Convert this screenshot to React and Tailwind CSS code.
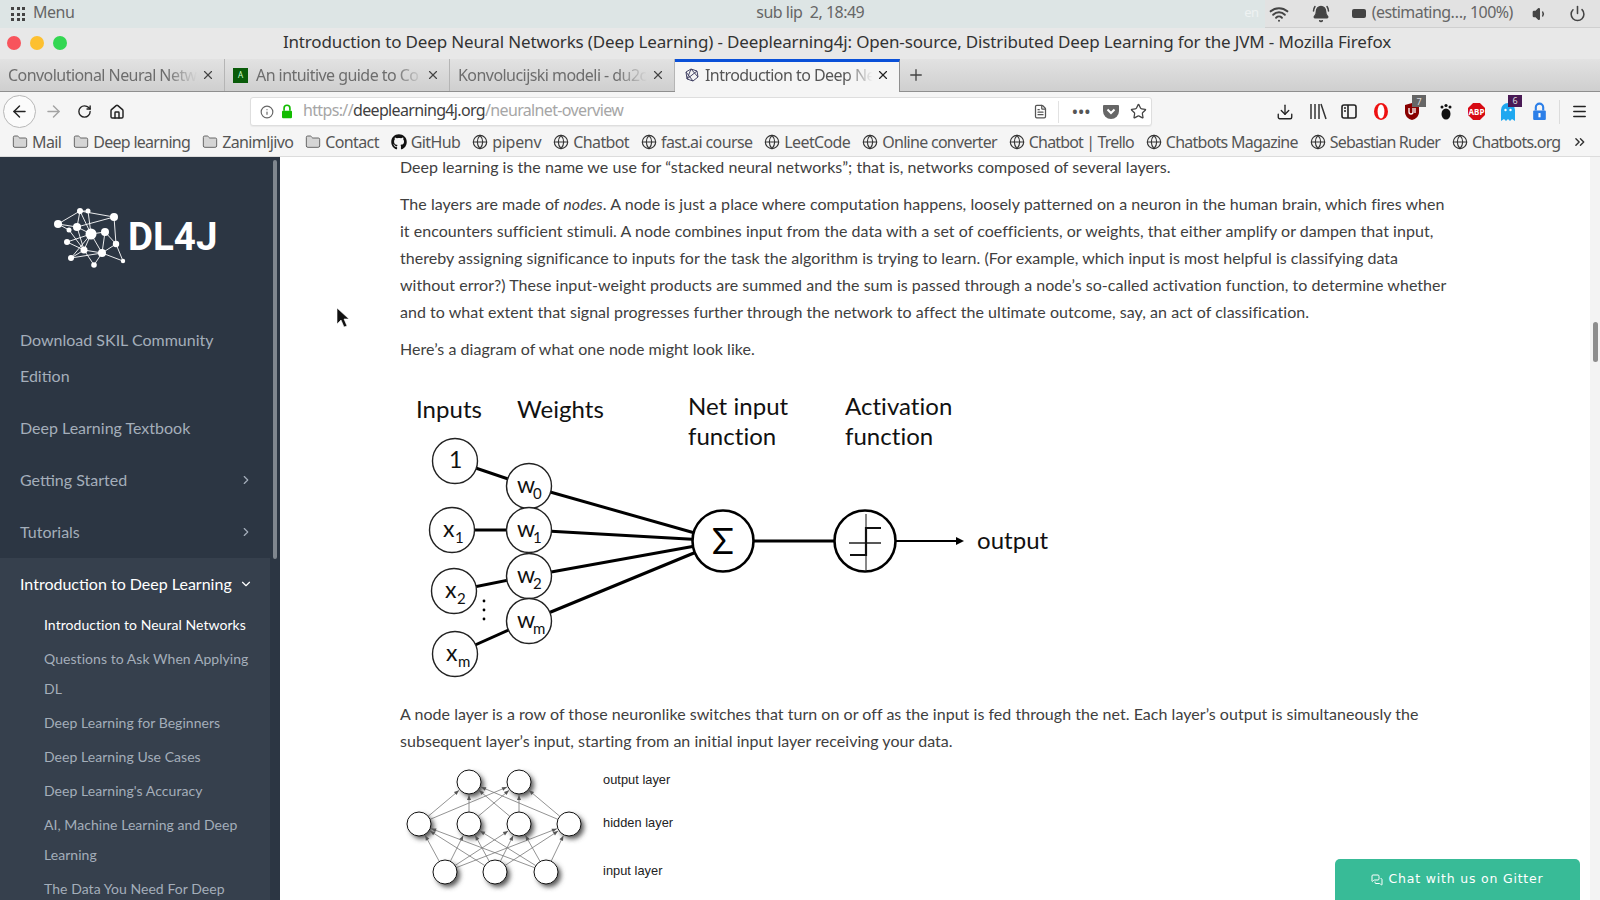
import { ArrowLeft, ArrowRight, RotateCw, Home, Info, Download, Star, Menu as MenuIcon, X, Plus, ChevronRight, ChevronDown, ChevronsRight, Volume1, Power, BellRing, Wifi, Folder, Globe, MessagesSquare, FileText } from "lucide-react";
import { FaGithub } from "react-icons/fa";

const chrome = "font-['Noto_Sans','Open_Sans',sans-serif]";

function PadLock({ color, width, height, className, keyhole }) {
  return (
    <svg width={width} height={height} viewBox="0 0 14 18" className={className}>
      <path d="M3.5 8V5a3.5 3.5 0 0 1 7 0v3" fill="none" stroke={color} strokeWidth="2" />
      <rect x="1" y="8" width="12" height="9" rx="1" fill={color} />
      {keyhole && <rect x="6" y="10.5" width="2" height="4" fill="#fff" />}
    </svg>
  );
}

function Tab({ title, width, icon }) {
  return (
    <div className="flex h-full items-center border-r border-[#b5b5b5] pl-[8px] pr-[9px]" style={{ width }}>
      {icon}
      <span className="min-w-0 flex-1 overflow-hidden whitespace-nowrap text-[#6d6d6d] text-[16px] tracking-[-0.55px] [mask-image:linear-gradient(to_right,black_82%,transparent_98%)]">{title}</span>
      <X size={14} strokeWidth={2} className="shrink-0 text-[#444]" />
    </div>
  );
}

function Bookmark({ label, type, track = "tracking-[-0.62px]" }) {
  return (
    <div className="flex items-center gap-[4px] whitespace-nowrap">
      {type === "folder" && <Folder size={16} strokeWidth={1.3} fill="#d5d5d5" className="text-[#555]" />}
      {type === "globe" && <Globe size={16} strokeWidth={1.7} className="text-[#333]" />}
      {type === "github" && <FaGithub size={16} className="text-[#111]" />}
      <span className={`text-[16px] text-[#555] ${track}`}>{label}</span>
    </div>
  );
}

function Logo() {
  const pts = [[58, 68], [80, 55], [88, 55], [114, 61], [77, 71], [91, 78], [105, 76], [67, 86], [116, 88], [84, 94], [102, 97], [71, 102], [94, 109], [123, 105], [69, 74]];
  const edges = [[0, 1], [0, 4], [0, 14], [1, 2], [1, 4], [1, 5], [2, 5], [3, 4], [3, 8], [3, 1], [4, 5], [4, 9], [5, 6], [5, 10], [5, 9], [6, 8], [6, 10], [7, 5], [7, 9], [8, 10], [8, 13], [9, 10], [9, 11], [9, 12], [10, 12], [10, 13], [11, 10], [14, 9], [5, 11]];
  const sizes = [4, 3, 2.5, 4, 4, 5.5, 4, 3, 3.2, 3.5, 4, 3, 2.8, 2.2, 2.5];
  return (
    <div className="flex h-[108px] items-center pl-[52px]">
      <svg width="76" height="66" viewBox="52 48 76 66" className="shrink-0">
        {edges.map(([a, b], i) => (
          <line key={i} x1={pts[a][0]} y1={pts[a][1]} x2={pts[b][0]} y2={pts[b][1]} stroke="#fff" strokeWidth="0.9" />
        ))}
        {pts.map(([x, y], i) => (
          <circle key={i} cx={x} cy={y} r={sizes[i]} fill="#fff" />
        ))}
      </svg>
      <span className="font-['Roboto',sans-serif] text-[38.5px] font-bold leading-none text-white">DL4J</span>
    </div>
  );
}

function TopItem({ label, arrow, active, className }) {
  return (
    <div className={`flex items-center justify-between pl-[20px] pr-[17px] py-[8px] text-[16px] leading-[36px] ${active ? "text-white" : "text-[#a4aeba]"} ${className || ""}`}>
      <span>{label}</span>
      {arrow === "right" && <ChevronRight size={14} className="text-[#a4aeba]" />}
      {arrow === "down" && <ChevronDown size={14} className="text-white" />}
    </div>
  );
}

function SubItem({ label, active }) {
  return (
    <div className={`py-[2px] pl-[44px] pr-[18px] text-[14px] leading-[30px] tracking-[0.05px] ${active ? "text-white" : "text-[#a4aeba]"}`}>{label}</div>
  );
}

function Sidebar() {
  return (
    <div className="flex w-[280px] shrink-0 overflow-hidden bg-[#2c3643] font-['Lato',sans-serif]">
      <div className="w-[270px] shrink-0">
        <div className="h-[26px]" />
        <Logo />
        <div className="h-[23px]" />
        <TopItem label="Download SKIL Community Edition" />
        <TopItem label="Deep Learning Textbook" />
        <TopItem label="Getting Started" arrow="right" />
        <TopItem label="Tutorials" arrow="right" />
        <div className="bg-[#36404d] pb-[20px]">
          <TopItem label="Introduction to Deep Learning" arrow="down" active className="mb-[-2px]" />
          <SubItem label="Introduction to Neural Networks" active />
          <SubItem label="Questions to Ask When Applying DL" />
          <SubItem label="Deep Learning for Beginners" />
          <SubItem label="Deep Learning Use Cases" />
          <SubItem label="Deep Learning's Accuracy" />
          <SubItem label="AI, Machine Learning and Deep Learning" />
          <SubItem label="The Data You Need For Deep Learning" />
        </div>
      </div>
      <div className="ml-[3px] mt-[3px] h-[399px] w-[4px] rounded-full bg-[#7f868e]" />
    </div>
  );
}

function NodeDiagram() {
  const nodes = [
    [55, 81, "1", ""],
    [129, 106, "w", "0"],
    [52, 150, "x", "1"],
    [129, 150, "w", "1"],
    [54, 211, "x", "2"],
    [129, 196, "w", "2"],
    [129, 241, "w", "m"],
    [55, 274, "x", "m"],
  ];
  const cx = 323;
  const cy = 161;
  return (
    <svg width="660" height="310" viewBox="0 0 660 310" className="block font-['Lato','Open_Sans',sans-serif]">
      <g stroke="#000" fill="none">
        <line x1="55" y1="81" x2="129" y2="106" strokeWidth="3" />
        <line x1="52" y1="150" x2="129" y2="150" strokeWidth="3" />
        <line x1="54" y1="211" x2="129" y2="196" strokeWidth="3" />
        <line x1="55" y1="274" x2="129" y2="241" strokeWidth="3" />
        <line x1="129" y1="106" x2={cx} y2={cy} strokeWidth="3" />
        <line x1="129" y1="150" x2={cx} y2={cy} strokeWidth="3" />
        <line x1="129" y1="196" x2={cx} y2={cy} strokeWidth="3" />
        <line x1="129" y1="241" x2={cx} y2={cy} strokeWidth="3" />
        <line x1="323" y1="161" x2="466" y2="161" strokeWidth="3" />
        <line x1="466" y1="161" x2="558" y2="161" strokeWidth="2" />
      </g>
      <polygon points="564,161 556,157 556,165" fill="#000" />
      {nodes.map(([x, y, l, sub]) => (
        <g key={`${l}${sub}`}>
          <circle cx={x} cy={y} r="22.5" fill="#fff" stroke="#222" strokeWidth="1.4" />
          <text x={x - (sub ? (l === "x" ? 9 : 12) : 6)} y={y + 7} fontSize="23" fill="#111">{l}</text>
          {sub && <text x={x + (l === "x" ? 3 : 4)} y={y + 13} fontSize="15" fill="#111">{sub}</text>}
        </g>
      ))}
      <circle cx="323" cy="161" r="30.5" fill="#fff" stroke="#000" strokeWidth="2.6" />
      <circle cx="465" cy="161" r="30.5" fill="#fff" stroke="#000" strokeWidth="2.6" />
      <text x="323" y="174" fontSize="36" textAnchor="middle" fill="#000">Σ</text>
      <g stroke="#111" fill="none">
        <path d="M466 134V190" strokeWidth="1" />
        <path d="M481 148H466V175H450" strokeWidth="2.2" />
        <path d="M449 163H481" strokeWidth="1.4" />
      </g>
      <g fontSize="24" fill="#111">
        <text x="16" y="38">Inputs</text>
        <text x="117" y="38">Weights</text>
        <text x="288" y="35">Net input</text>
        <text x="288" y="65">function</text>
        <text x="445" y="35">Activation</text>
        <text x="445" y="65">function</text>
        <text x="577" y="169">output</text>
      </g>
      <g fill="#000">
        <circle cx="84" cy="221" r="1.4" />
        <circle cx="84" cy="230" r="1.4" />
        <circle cx="84" cy="239" r="1.4" />
      </g>
    </svg>
  );
}

function LayerDiagram() {
  const out = [[79, 32], [129, 32]];
  const hid = [[29, 74], [79, 74], [129, 74], [179, 74]];
  const inp = [[55, 122], [105, 122], [156, 122]];
  const lines = [];
  hid.forEach((h) => out.forEach((o) => lines.push([h, o])));
  inp.forEach((i) => hid.forEach((h) => lines.push([i, h])));
  const arrow = ([x1, y1], [x2, y2]) => {
    const d = Math.hypot(x2 - x1, y2 - y1);
    const ux = (x2 - x1) / d;
    const uy = (y2 - y1) / d;
    const tx = x2 - ux * 13;
    const ty = y2 - uy * 13;
    return { x1: x1 + ux * 12, y1: y1 + uy * 12, tx, ty, ux, uy };
  };
  return (
    <svg width="320" height="150" viewBox="0 0 320 150" className="block">
      <defs>
        <filter id="soft" x="-50%" y="-50%" width="200%" height="200%">
          <feGaussianBlur stdDeviation="2.5" />
        </filter>
      </defs>
      {lines.map(([a, b], i) => {
        const p = arrow(a, b);
        return (
          <g key={i}>
            <line x1={p.x1} y1={p.y1} x2={p.tx} y2={p.ty} stroke="#777" strokeWidth="0.8" />
            <polygon
              points={`${p.tx},${p.ty} ${p.tx - p.ux * 5 - p.uy * 2},${p.ty - p.uy * 5 + p.ux * 2} ${p.tx - p.ux * 5 + p.uy * 2},${p.ty - p.uy * 5 - p.ux * 2}`}
              fill="#555"
            />
          </g>
        );
      })}
      {[...out, ...hid, ...inp].map(([x, y], i) => (
        <g key={i}>
          <circle cx={x + 3} cy={y + 3} r="12" fill="#555" filter="url(#soft)" />
          <circle cx={x} cy={y} r="12" fill="#fff" stroke="#111" strokeWidth="1" />
        </g>
      ))}
      <g fontSize="12.8" fill="#222" className="font-['Liberation_Sans',sans-serif]">
        <text x="213" y="34">output layer</text>
        <text x="213" y="77">hidden layer</text>
        <text x="213" y="125">input layer</text>
      </g>
    </svg>
  );
}

function Badge({ text, bg }) {
  return (
    <span className="absolute -right-[6px] -top-[7px] flex h-[12px] w-[14px] items-center justify-center text-[9px] leading-none text-[#ddd]" style={{ background: bg }}>{text}</span>
  );
}

function Toolbar() {
  return (
    <div className="flex h-[36px] items-center bg-[#f5f5f5] pl-[3px] pt-[3px]">
      <div className="flex h-[33px] w-[33px] items-center justify-center rounded-full border border-[#b8b8b8] bg-[#fbfbfb]">
        <ArrowLeft size={19} strokeWidth={1.8} className="text-[#222]" />
      </div>
      <ArrowRight size={19} strokeWidth={1.8} className="ml-[8px] text-[#a3a3a3]" />
      <RotateCw size={15} strokeWidth={2.2} className="ml-[14px] text-[#222]" />
      <Home size={16} strokeWidth={2.2} className="ml-[17px] text-[#222]" />
      <div className="ml-[125px] flex h-[29px] w-[902px] items-center rounded-[3px] border border-[#dedede] bg-white pl-[9px] pr-[4px] shadow-[0_1px_1px_rgba(0,0,0,0.05)]">
        <Info size={14} className="text-[#666]" />
        <PadLock color="#12bc00" width={12} height={15} className="ml-[7px]" />
        <span className="ml-[10px] whitespace-nowrap pb-[3px] text-[16px] tracking-[-0.65px] text-[#a6a6a6]">
          https://<span className="text-[#3f3f3f]">deeplearning4j.org</span>/neuralnet-overview
        </span>
        <FileText size={15} className="ml-auto text-[#555]" />
        <div className="ml-[10px] mr-[13px] h-[22px] w-px bg-[#e2e2e2]" />
        <span className="text-[14px] font-bold leading-none tracking-[1px] text-[#555]">•••</span>
        <svg width="18" height="17" viewBox="0 0 18 17" className="ml-[11px]">
          <path d="M2 2h14a1 1 0 0 1 1 1v5a8 8 0 0 1-16 0V3a1 1 0 0 1 1-1z" fill="#666" />
          <path d="M5.5 6.5L9 10l3.5-3.5" fill="none" stroke="#fff" strokeWidth="2" />
        </svg>
        <Star size={17} strokeWidth={1.8} className="ml-[10px] text-[#444]" />
      </div>
      <div className="ml-[124px] flex items-center">
        <Download size={18} strokeWidth={1.8} className="text-[#222]" />
        <svg width="18" height="17" viewBox="0 0 18 17" className="ml-[15px] text-[#333]" stroke="currentColor" strokeWidth="1.5">
          <path d="M2 1v15M6 1v15M10 1v15M12 1l5 15" fill="none" />
        </svg>
        <svg width="16" height="15" viewBox="0 0 16 15" className="ml-[14px]" fill="none" stroke="#222" strokeWidth="1.6">
          <rect x="1" y="1" width="14" height="13" rx="2" />
          <path d="M7 1v13M3 4h2M3 7h2" />
        </svg>
        <svg width="16" height="19" viewBox="0 0 16 19" className="ml-[16px]">
          <ellipse cx="8" cy="9.5" rx="7" ry="8.5" fill="#e11" />
          <ellipse cx="8" cy="9.5" rx="3.4" ry="7" fill="#fff" />
        </svg>
        <div className="relative ml-[15px]">
          <svg width="16" height="19" viewBox="0 0 16 19" className="block">
            <path d="M8 1l7 2v7c0 4-3 7-7 8-4-1-7-4-7-8V3z" fill="#800" />
            <path d="M5 6v4a2 2 0 0 0 4 0V6M11 6v5" fill="none" stroke="#fff" strokeWidth="1.3" />
          </svg>
          <Badge text="7" bg="#666" />
        </div>
        <svg width="14" height="18" viewBox="0 0 14 18" className="ml-[19px]">
          <ellipse cx="7" cy="11" rx="4.5" ry="5.5" fill="#111" />
          <circle cx="3" cy="4" r="1.5" fill="#111" />
          <circle cx="7" cy="2.5" r="1.6" fill="#111" />
          <circle cx="11" cy="4" r="1.5" fill="#111" />
        </svg>
        <div className="ml-[15px] flex h-[17px] w-[17px] items-center justify-center bg-[#d70b14] text-[8px] font-bold leading-none text-white [clip-path:polygon(30%_0,70%_0,100%_30%,100%_70%,70%_100%,30%_100%,0_70%,0_30%)]">ABP</div>
        <div className="relative ml-[15px]">
          <svg width="16" height="20" viewBox="0 0 16 20" className="block">
            <path d="M1 19V8a7 7 0 0 1 14 0v11l-3-2-2 2-2-2-2 2-2-2z" fill="#1fa8f0" />
            <circle cx="5.5" cy="8" r="1.2" fill="#fff" />
            <circle cx="10.5" cy="8" r="1.2" fill="#fff" />
          </svg>
          <Badge text="6" bg="#4a1a55" />
        </div>
        <PadLock color="#2c7fe8" width={15} height={19} className="ml-[16px]" keyhole />
        <div className="ml-[12px] h-[24px] w-px bg-[#dcdcdc]" />
        <MenuIcon size={17} strokeWidth={2.2} className="ml-[11px] text-[#222]" />
      </div>
    </div>
  );
}

export default function App() {
  return (
    <div className={`flex h-[900px] w-[1600px] flex-col overflow-hidden bg-white ${chrome}`}>
      {/* desktop panel */}
      <div className="flex h-[28px] items-center bg-[#dde5e5] text-[16px] tracking-[-0.5px] text-[#666]">
        <div className="ml-[11px] grid grid-cols-3 gap-[2.5px]">
          {Array.from({ length: 9 }).map((_, i) => (
            <span key={i} className="h-[3px] w-[3px] bg-[#444]" />
          ))}
        </div>
        <span className="ml-[8px] pb-[4px]">Menu</span>
        <span className="ml-[682px] pb-[4px]">sub lip&nbsp; 2, 18:49</span>
        <span className="ml-[380px] pb-[2px] text-[13px] text-[#eef2f2]">en</span>
        <div className="ml-[6px] flex h-[28px] flex-1 items-center border-b border-[#cfcfcf] bg-[#e2e2e2] pl-[4px]">
          <Wifi size={20} strokeWidth={2.4} className="text-[#444]" />
          <BellRing size={18} fill="#444" className="ml-[23px] text-[#444]" />
          <span className="ml-[22px] h-[9px] w-[14px] rounded-[2px] bg-[#444]" />
          <span className="ml-[6px] whitespace-nowrap pb-[4px] tracking-[-0.55px]">(estimating…, 100%)</span>
          <Volume1 size={16} fill="#444" className="ml-[19px] text-[#444]" />
          <Power size={17} strokeWidth={2.2} className="ml-[21px] text-[#444]" />
        </div>
      </div>

      {/* window title */}
      <div className="relative flex h-[31px] items-center justify-center bg-[#e8e8e8] pb-[4px] pl-[74px]">
        <div className="absolute left-[7px] top-[8px] flex gap-[9px]">
          <span className="h-[14px] w-[14px] rounded-full bg-[#f8545c]" />
          <span className="h-[14px] w-[14px] rounded-full bg-[#fdc030]" />
          <span className="h-[14px] w-[14px] rounded-full bg-[#33d752]" />
        </div>
        <span className="text-[17px] tracking-[-0.15px] text-[#333]">Introduction to Deep Neural Networks (Deep Learning) - Deeplearning4j: Open-source, Distributed Deep Learning for the JVM - Mozilla Firefox</span>
      </div>

      {/* tabs */}
      <div className="flex h-[33px] items-center border-b border-[#8f8f8f] bg-gradient-to-b from-[#e2e2e2] to-[#cfcfcf]">
        <Tab title="Convolutional Neural Netw" width="225px" />
        <Tab
          title="An intuitive guide to Co"
          width="225px"
          icon={<span className="mr-[8px] flex h-[15px] w-[15px] shrink-0 items-center justify-center bg-[#0a5c0a] text-[8px] leading-none text-[#cfc]">A</span>}
        />
        <Tab title="Konvolucijski modeli - du2c" width="225px" />
        <div className="flex h-[33px] w-[225px] items-center border-r border-[#8f8f8f] border-t-[3px] border-t-[#0a50d8] bg-[#f5f5f5] pb-[3px] pl-[9px] pr-[9px]">
          <svg width="16" height="16" viewBox="0 0 16 16" className="mr-[5px] shrink-0" stroke="#446" strokeWidth="1">
            <path d="M2 5L7 2L13 4L14 10L9 14L3 12zM2 5L9 14M7 2L3 12M13 4L3 12M7 2L14 10" fill="none" />
          </svg>
          <span className="min-w-0 flex-1 overflow-hidden whitespace-nowrap text-[16px] tracking-[-0.55px] text-[#555] [mask-image:linear-gradient(to_right,black_82%,transparent_98%)]">Introduction to Deep Ne</span>
          <X size={14} strokeWidth={2} className="shrink-0 text-[#222]" />
        </div>
        <Plus size={18} strokeWidth={1.8} className="ml-[7px] text-[#444]" />
      </div>

      <Toolbar />

      {/* bookmarks */}
      <div className="flex h-[29px] items-center gap-[12px] border-b border-[#dcdcdc] bg-[#f5f5f5] pl-[12px] pr-[12px]">
        <Bookmark label="Mail" type="folder" />
        <Bookmark label="Deep learning" type="folder" track="tracking-[-0.72px]" />
        <Bookmark label="Zanimljivo" type="folder" />
        <Bookmark label="Contact" type="folder" />
        <Bookmark label="GitHub" type="github" />
        <Bookmark label="pipenv" type="globe" track="tracking-[-0.3px]" />
        <Bookmark label="Chatbot" type="globe" />
        <Bookmark label="fast.ai course" type="globe" />
        <Bookmark label="LeetCode" type="globe" />
        <Bookmark label="Online converter" type="globe" track="tracking-[-0.72px]" />
        <Bookmark label="Chatbot | Trello" type="globe" track="tracking-[-0.85px]" />
        <Bookmark label="Chatbots Magazine" type="globe" track="tracking-[-0.75px]" />
        <Bookmark label="Sebastian Ruder" type="globe" track="tracking-[-0.82px]" />
        <Bookmark label="Chatbots.org" type="globe" track="tracking-[-0.8px]" />
        <ChevronsRight size={18} strokeWidth={2.2} className="ml-auto text-[#333]" />
      </div>

      {/* page */}
      <div className="relative flex min-h-0 flex-1">
        <Sidebar />
        <div className="min-w-0 flex-1 overflow-hidden font-['Lato',sans-serif] text-[16px] leading-[27px] tracking-[0.035px] text-[#404040]">
          <div className="ml-[120px] mt-[-4px] w-[1048px]">
            <p className="mb-[10px]">Deep learning is the name we use for “stacked neural networks”; that is, networks composed of several layers.</p>
            <p className="mb-[10px]">The layers are made of <em>nodes</em>. A node is just a place where computation happens, loosely patterned on a neuron in the human brain, which fires when it encounters sufficient stimuli. A node combines input from the data with a set of coefficients, or weights, that either amplify or dampen that input, thereby assigning significance to inputs for the task the algorithm is trying to learn. (For example, which input is most helpful is classifying data without error?) These input-weight products are summed and the sum is passed through a node’s so-called activation function, to determine whether and to what extent that signal progresses further through the network to affect the ultimate outcome, say, an act of classification.</p>
            <p className="mb-[18px]">Here’s a diagram of what one node might look like.</p>
            <NodeDiagram />
            <p className="mb-[10px] mt-[10px]">A node layer is a row of those neuronlike switches that turn on or off as the input is fed through the net. Each layer’s output is simultaneously the subsequent layer’s input, starting from an initial input layer receiving your data.</p>
            <div className="ml-[-10px] mt-[-14px]">
              <LayerDiagram />
            </div>
          </div>
        </div>
        <div className="w-[10px] shrink-0 bg-[#f3f3f3] pt-[165px]">
          <div className="ml-[3px] h-[40px] w-[5px] rounded-full bg-[#8d8d8d]" />
        </div>

        {/* arrow cursor in the shot */}
        <svg width="14" height="22" viewBox="0 0 14 22" className="absolute left-[336px] top-[150px]">
          <path d="M1 1V17L5 13L8 20L11 19L8 12H13z" fill="#111" stroke="#fff" strokeWidth="0.6" />
        </svg>

        <div className="absolute bottom-0 right-[20px] flex h-[41px] w-[245px] items-center justify-center gap-[5px] rounded-t-[5px] bg-[#38bb97] font-['DejaVu_Sans',sans-serif] text-[12.5px] tracking-[0.8px] text-white">
          <MessagesSquare size={12} />
          Chat with us on Gitter
        </div>
      </div>
    </div>
  );
}
